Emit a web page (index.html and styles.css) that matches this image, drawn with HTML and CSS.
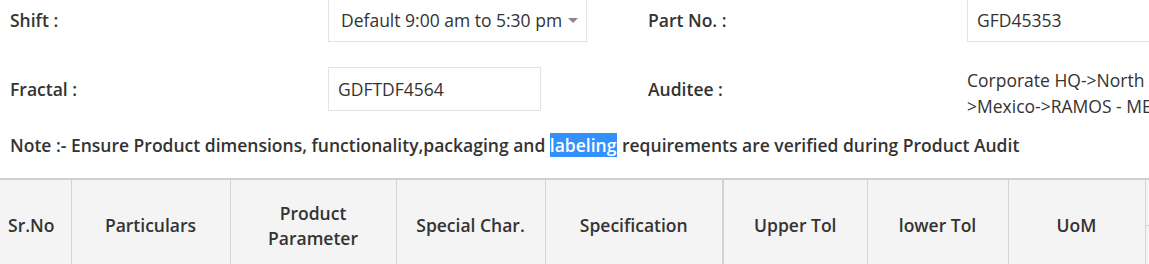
FILE: index.html
```
<!DOCTYPE html>
<html lang="en">
<head>
  <meta charset="UTF-8">
  <title>Product Audit</title>
  <link rel="stylesheet" href="styles.css">
</head>
<body>
  <div class="audit-form">
    <!-- baris 1 -->
    <div class="form-row">
      <label class="form-label">Shift :</label>
      <div class="form-field">
        <div class="select-box">Default 9:00 am to 5:30 pm<span class="caret"></span></div>
      </div>
      <label class="form-label">Part No. :</label>
      <div class="form-field">
        <div class="text-box text-box-wide">GFD45353</div>
      </div>
    </div>

    <!-- baris 2 -->
    <div class="form-row">
      <label class="form-label">Fractal :</label>
      <div class="form-field">
        <div class="text-box">GDFTDF4564</div>
      </div>
      <label class="form-label">Auditee :</label>
      <div class="form-field">
        <div class="auditee-text">Corporate HQ-&gt;North America-&gt;Mexico-&gt;RAMOS - MEXICO</div>
      </div>
    </div>
  </div>

  <p class="note">Note :- Ensure Product dimensions, functionality,packaging and <span class="highlight">labeling</span> requirements are verified during Product Audit</p>

  <table class="audit-table">
    <colgroup>
      <col style="width:71px">
      <col style="width:159px">
      <col style="width:166px">
      <col style="width:149px">
      <col style="width:178px">
      <col style="width:144px">
      <col style="width:141px">
      <col style="width:137px">
      <col style="width:200px">
    </colgroup>
    <thead>
      <tr>
        <th rowspan="2" class="col-no">Sr.No</th>
        <th rowspan="2">Particulars</th>
        <th rowspan="2">Product<br>Parameter</th>
        <th rowspan="2">Special Char.</th>
        <th rowspan="2">Specification</th>
        <th rowspan="2" class="thick-left">Upper Tol</th>
        <th rowspan="2">lower Tol</th>
        <th rowspan="2">UoM</th>
        <th class="sub-head"></th>
      </tr>
      <tr>
        <th class="sub-head"></th>
      </tr>
    </thead>
  </table>
</body>
</html>
```

FILE: styles.css
```
body {
  font-family: 'Open Sans', sans-serif;
  font-size: 17.5px;
  color: #333;
  margin: 0;
  overflow: hidden;
  background: #fff;
}

.audit-form {
  margin-top: -2px;
  padding: 0 8px;
  display: flex;
  flex-direction: column;
  gap: 25px;
}

.form-row {
  display: grid;
  grid-template-columns: 320px 318px 321px 320px;
  grid-auto-rows: 44px;
  align-items: center;
}

.form-label {
  font-weight: 600;
  padding-left: 2px;
}

.select-box,
.text-box {
  box-sizing: border-box;
  height: 44px;
  line-height: 42px;
  border: 1px solid #e3e3e3;
  background: #fff;
  white-space: nowrap;
}

.select-box {
  width: 259px;
  padding: 0 8px 0 12px;
  display: flex;
  align-items: center;
}

.caret {
  width: 0;
  height: 0;
  border-left: 5px solid transparent;
  border-right: 5px solid transparent;
  border-top: 5px solid #888;
  margin: 1px 0 0 auto;
}

.text-box {
  width: 213px;
  padding: 0 9px;
}

.text-box-wide {
  width: 300px;
}

.auditee-text {
  width: 270px;
  line-height: 26px;
  align-self: start;
  margin-top: 8px;
}

.note {
  font-weight: 600;
  line-height: 22px;
  margin: 23px 0 22px;
  padding-left: 10px;
  white-space: nowrap;
}

.highlight {
  background: #3390ff;
  color: #fff;
  padding-right: 1px;
}

.audit-table {
  border-collapse: collapse;
  table-layout: fixed;
  width: 1345px;
  border-top: 2px solid #d0d0d0;
}

.audit-table th {
  background: #f4f4f4;
  font-weight: 600;
  text-align: center;
  line-height: 25px;
  border-right: 1px solid #d3d3d3;
  height: 45px;
  padding: 0 6px;
}

.audit-table th.col-no {
  padding: 0 12px 0 4px;
}

.audit-table th.thick-left {
  border-left: 2px solid #d3d3d3;
}

.audit-table th.sub-head {
  border-bottom: 1px solid #d3d3d3;
}
```
